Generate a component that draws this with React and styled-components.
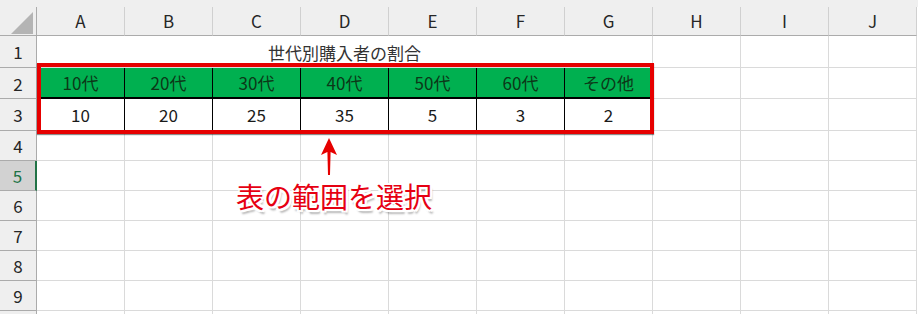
import React from 'react'
import styled, { createGlobalStyle } from 'styled-components'

const GlobalStyle = createGlobalStyle`
  html, body {
    margin: 0;
    padding: 0;
    background: #ffffff;
    overflow: hidden;
  }
  body {
    font-family: "Noto Sans CJK JP", "Noto Sans", sans-serif;
  }
`

const Sheet = styled.div`
  position: relative;
  width: 918px;
  height: 314px;
  overflow: hidden;
  background: #ffffff;
`

const TopStrip = styled.div`
  height: 7px;
  background: #efefef;
`

const Row = styled.div`
  display: grid;
  grid-template-columns: 37px repeat(10, 88px);
  height: ${p => p.h}px;
`

const Corner = styled.div`
  position: relative;
  background: #efefef;
  border-right: 1px solid #ababab;
  border-bottom: 1px solid #ababab;
  box-sizing: border-box;
  svg { position: absolute; left: 10px; top: 4px; }
`

const ColHead = styled.div`
  display: flex;
  align-items: center;
  justify-content: center;
  background: #efefef;
  border-right: 1px solid #d0d0d0;
  border-bottom: 1px solid #ababab;
  box-sizing: border-box;
  font-size: 17px;
  color: #262626;
  padding-bottom: 1px;
`

const RowHead = styled.div`
  display: flex;
  align-items: center;
  justify-content: center;
  background: ${p => p.active ? '#d2d2d2' : '#efefef'};
  border-right: ${p => p.active ? '2px solid #217346' : '1px solid #ababab'};
  border-bottom: 1px solid #ababab;
  box-sizing: border-box;
  font-size: 17px;
  color: ${p => p.active ? '#217346' : '#262626'};
`

const Cell = styled.div`
  display: flex;
  align-items: center;
  justify-content: center;
  box-sizing: border-box;
  border-right: 1px solid ${p => p.tbl ? '#000' : '#dadada'};
  border-bottom: ${p => p.tbl === 'head' ? '2px solid #000' : p.tbl ? '1px solid #000' : '1px solid #dadada'};
  background: ${p => p.tbl === 'head' ? '#00b050' : '#ffffff'};
  color: ${p => p.tbl === 'head' ? '#0c3818' : '#1a1a1a'};
  font-size: 17px;
  white-space: nowrap;
`

const Title = styled(Cell)`
  grid-column: span 7;
  color: #333;
  padding-top: 2px;
`

const Frame = styled.div`
  position: absolute;
  left: 37px;
  top: 63px;
  width: 617px;
  height: 71px;
  box-sizing: border-box;
  border: 4px solid #e60000;
  box-shadow: 0 1px 1px rgba(0, 0, 0, 0.45);
`

const Arrow = styled.svg`
  position: absolute;
  left: 319px;
  top: 137px;
`

const Label = styled.div`
  position: absolute;
  left: 236px;
  top: 176px;
  font-size: 28px;
  font-weight: 400;
  color: #e60012;
  white-space: nowrap;
  text-shadow:
    2px 0 0 #fff, -2px 0 0 #fff, 0 2px 0 #fff, 0 -2px 0 #fff,
    2px 2px 0 #fff, -2px -2px 0 #fff, 2px -2px 0 #fff, -2px 2px 0 #fff,
    2px 4px 2px rgba(0, 0, 0, 0.3);
`

const cols = ['A', 'B', 'C', 'D', 'E', 'F', 'G', 'H', 'I', 'J']
const heads = ['10代', '20代', '30代', '40代', '50代', '60代', 'その他']
const values = ['10', '20', '25', '35', '5', '3', '2']
// row 10 is only a sliver at the bottom edge, its number is out of view
const heights = [32, 31, 32, 30, 30, 30, 30, 30, 30, 30]

function renderCells(r) {
  if (r === 1) {
    return [
      <Title key="t">世代別購入者の割合</Title>,
      ...cols.slice(7).map(c => <Cell key={c} />)
    ]
  }
  return cols.map((c, i) => {
    if (r === 2 && i < 7) return <Cell key={c} tbl="head">{heads[i]}</Cell>
    if (r === 3 && i < 7) return <Cell key={c} tbl="body">{values[i]}</Cell>
    return <Cell key={c} />
  })
}

export default function App() {
  return (
    <Sheet>
      <GlobalStyle />
      <TopStrip />
      <Row h={29}>
        <Corner>
          <svg width="24" height="24" viewBox="0 0 24 24">
            <polygon points="1,23 23,23 23,1" fill="#b4b4b4" />
          </svg>
        </Corner>
        {cols.map(c => <ColHead key={c}>{c}</ColHead>)}
      </Row>
      {heights.map((h, idx) => {
        const r = idx + 1
        return (
          <Row key={r} h={h}>
            <RowHead active={r === 5}>{r < 10 ? r : ''}</RowHead>
            {renderCells(r)}
          </Row>
        )
      })}
      <Frame />
      <Arrow width="20" height="40" viewBox="0 0 20 40">
        <polygon points="10,1 18,18 11.6,15 11,38 9,38 8.4,15 2,18" fill="#e60000" />
      </Arrow>
      <Label>表の範囲を選択</Label>
    </Sheet>
  )
}
